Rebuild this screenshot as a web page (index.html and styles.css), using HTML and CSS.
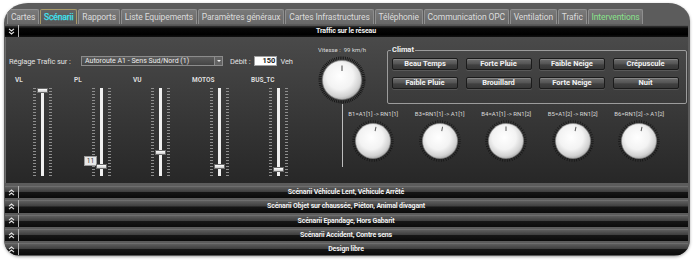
FILE: index.html
```html
<!DOCTYPE html>
<html lang="fr">
<head>
<meta charset="utf-8">
<title>Scénarii</title>
<link rel="stylesheet" href="styles.css">
</head>
<body>
<div class="panel">
  <nav class="tabs">
    <span class="tab">Cartes</span>
    <span class="tab active">Scénarii</span>
    <span class="tab">Rapports</span>
    <span class="tab">Liste Equipements</span>
    <span class="tab">Paramètres généraux</span>
    <span class="tab">Cartes Infrastructures</span>
    <span class="tab">Téléphonie</span>
    <span class="tab">Communication OPC</span>
    <span class="tab">Ventilation</span>
    <span class="tab">Trafic</span>
    <span class="tab green">Interventions</span>
  </nav>

  <div class="bar open">
    <span class="btn"><svg width="7" height="7" viewBox="0 0 7 7"><polyline points="1,0.8 3.5,3 6,0.8" /><polyline points="1,3.8 3.5,6 6,3.8" /></svg></span>
    <span class="title">Traffic sur le réseau</span>
  </div>

  <div class="content">
    <div class="left">
      <div class="setting">
        <span class="lbl main">Réglage Trafic sur :</span>
        <div class="select"><span class="val">Autoroute A1 - Sens Sud/Nord (1)</span><span class="arrow"></span></div>
        <span class="lbl debit">Débit :</span>
        <span class="input">150</span>
        <span class="lbl veh">Veh</span>
      </div>
      <div class="sliders">
        <div class="sgroup"><div class="slabel">VL</div><div class="sbody"><i class="ticks"></i><div class="track"><b class="thumb" style="top:0px"></b></div><i class="ticks"></i></div></div>
        <div class="sgroup"><div class="slabel">PL</div><div class="sbody"><i class="ticks"></i><div class="track"><span class="tip">11</span><b class="thumb" style="top:76px"></b></div><i class="ticks"></i></div></div>
        <div class="sgroup"><div class="slabel">VU</div><div class="sbody"><i class="ticks"></i><div class="track"><b class="thumb" style="top:62px"></b></div><i class="ticks"></i></div></div>
        <div class="sgroup"><div class="slabel">MOTOS</div><div class="sbody"><i class="ticks"></i><div class="track"><b class="thumb" style="top:76px"></b></div><i class="ticks"></i></div></div>
        <div class="sgroup"><div class="slabel">BUS_TC</div><div class="sbody"><i class="ticks"></i><div class="track"><b class="thumb" style="top:79px"></b></div><i class="ticks"></i></div></div>
      </div>
    </div>

    <div class="right">
      <div class="rtop">
        <div class="speed">
          <div class="slbl">Vitesse :&nbsp; 99 km/h</div>
          <svg class="bigknob" width="48" height="48" viewBox="0 0 48 48">
            <defs>
              <radialGradient id="kg" cx="45%" cy="40%" r="62%">
                <stop offset="0" stop-color="#ffffff"/>
                <stop offset="0.55" stop-color="#f3f3f3"/>
                <stop offset="0.85" stop-color="#d2d2d2"/>
                <stop offset="1" stop-color="#a9a9a9"/>
              </radialGradient>
            </defs>
            <circle cx="24" cy="24" r="22" fill="none" stroke="#0e0e0e" stroke-width="3" stroke-dasharray="0.7 1.1"/>
            <circle cx="24" cy="24" r="19.5" fill="url(#kg)" stroke="#8c8c8c" stroke-width="0.6"/>
            <line x1="24" y1="9.5" x2="24" y2="15" stroke="#555" stroke-width="1.1"/>
          </svg>
        </div>
        <fieldset class="climat">
          <legend>Climat</legend>
          <div class="cgrid">
            <button class="cbtn">Beau Temps</button>
            <button class="cbtn">Forte Pluie</button>
            <button class="cbtn">Faible Neige</button>
            <button class="cbtn">Crépuscule</button>
            <button class="cbtn">Faible Pluie</button>
            <button class="cbtn">Brouillard</button>
            <button class="cbtn">Forte Neige</button>
            <button class="cbtn">Nuit</button>
          </div>
        </fieldset>
      </div>
      <div class="rbottom">
        <div class="stem"></div>
        <div class="knobs">
          <div class="kn"><div class="klbl">B1=A1[1] -&gt; RN1[1]</div>
            <svg width="42" height="42" viewBox="0 0 42 42"><circle cx="21" cy="21" r="19.5" fill="none" stroke="#111" stroke-width="2.6" stroke-dasharray="0.6 1.8"/><circle cx="21" cy="21" r="17.5" fill="url(#kg)" stroke="#8c8c8c" stroke-width="0.6"/><line x1="21" y1="6.5" x2="21" y2="11" stroke="#555" stroke-width="1" transform="rotate(12 21 21)"/></svg></div>
          <div class="kn"><div class="klbl">B3=RN1[1] -&gt; A1[1]</div>
            <svg width="42" height="42" viewBox="0 0 42 42"><circle cx="21" cy="21" r="19.5" fill="none" stroke="#111" stroke-width="2.6" stroke-dasharray="0.6 1.8"/><circle cx="21" cy="21" r="17.5" fill="url(#kg)" stroke="#8c8c8c" stroke-width="0.6"/><line x1="21" y1="6.5" x2="21" y2="11" stroke="#555" stroke-width="1" transform="rotate(10 21 21)"/></svg></div>
          <div class="kn"><div class="klbl">B4=A1[1] -&gt; RN1[2]</div>
            <svg width="42" height="42" viewBox="0 0 42 42"><circle cx="21" cy="21" r="19.5" fill="none" stroke="#111" stroke-width="2.6" stroke-dasharray="0.6 1.8"/><circle cx="21" cy="21" r="17.5" fill="url(#kg)" stroke="#8c8c8c" stroke-width="0.6"/><line x1="21" y1="6.5" x2="21" y2="11" stroke="#555" stroke-width="1"/></svg></div>
          <div class="kn"><div class="klbl">B5=A1[2] -&gt; RN1[2]</div>
            <svg width="42" height="42" viewBox="0 0 42 42"><circle cx="21" cy="21" r="19.5" fill="none" stroke="#111" stroke-width="2.6" stroke-dasharray="0.6 1.8"/><circle cx="21" cy="21" r="17.5" fill="url(#kg)" stroke="#8c8c8c" stroke-width="0.6"/><line x1="21" y1="6.5" x2="21" y2="11" stroke="#555" stroke-width="1" transform="rotate(12 21 21)"/></svg></div>
          <div class="kn"><div class="klbl">B6=RN1[2] -&gt; A1[2]</div>
            <svg width="42" height="42" viewBox="0 0 42 42"><circle cx="21" cy="21" r="19.5" fill="none" stroke="#111" stroke-width="2.6" stroke-dasharray="0.6 1.8"/><circle cx="21" cy="21" r="17.5" fill="url(#kg)" stroke="#8c8c8c" stroke-width="0.6"/><line x1="21" y1="6.5" x2="21" y2="11" stroke="#555" stroke-width="1" transform="rotate(12 21 21)"/></svg></div>
        </div>
      </div>
    </div>
  </div>

  <div class="bars">
    <div class="bar"><span class="btn"><svg width="7" height="7" viewBox="0 0 7 7"><polyline points="1,3.2 3.5,1 6,3.2" /><polyline points="1,6.2 3.5,4 6,6.2" /></svg></span><span class="title">Scénarii Véhicule Lent, Véhicule Arrêté</span></div>
    <div class="bar"><span class="btn"><svg width="7" height="7" viewBox="0 0 7 7"><polyline points="1,3.2 3.5,1 6,3.2" /><polyline points="1,6.2 3.5,4 6,6.2" /></svg></span><span class="title">Scénarii Objet sur chaussée, Piéton, Animal divagant</span></div>
    <div class="bar"><span class="btn"><svg width="7" height="7" viewBox="0 0 7 7"><polyline points="1,3.2 3.5,1 6,3.2" /><polyline points="1,6.2 3.5,4 6,6.2" /></svg></span><span class="title">Scénarii Epandage, Hors Gabarit</span></div>
    <div class="bar"><span class="btn"><svg width="7" height="7" viewBox="0 0 7 7"><polyline points="1,3.2 3.5,1 6,3.2" /><polyline points="1,6.2 3.5,4 6,6.2" /></svg></span><span class="title">Scénarii Accident, Contre sens</span></div>
    <div class="bar"><span class="btn"><svg width="7" height="7" viewBox="0 0 7 7"><polyline points="1,3.2 3.5,1 6,3.2" /><polyline points="1,6.2 3.5,4 6,6.2" /></svg></span><span class="title">Design libre</span></div>
  </div>
</div>
</body>
</html>
```

FILE: styles.css
```css
* { box-sizing: border-box; }
html, body { margin: 0; padding: 0; }
body {
  width: 695px;
  height: 260px;
  background: #ffffff;
  font-family: Roboto, "Liberation Sans", sans-serif;
  overflow: hidden;
}

.panel {
  margin: 3px 5px 0 4px;
  height: 253px;
  background: #5c5c5c;
  border-radius: 24px 22px 16px 16px / 20px 18px 16px 16px;
  padding: 6px 2px 0 1px;
  overflow: hidden;
  box-shadow: 0 1px 3px rgba(0, 0, 0, 0.35);
}

/* tabs */
.tabs {
  display: flex;
  gap: 1px;
  height: 15px;
  padding-left: 2px;
}
.tab {
  height: 15px;
  line-height: 14px;
  padding: 0 2.9px;
  font-size: 8.5px;
  letter-spacing: -0.1px;
  color: #dcdcdc;
  background: linear-gradient(#7a7a7a, #686868);
  border: 1px solid #8f8f8f;
  border-bottom: none;
  border-radius: 2px 2px 0 0;
  white-space: nowrap;
}
.tab.active {
  color: #3ee4f2;
  background: linear-gradient(#646464, #575757);
  border-color: #a89a68;
  -webkit-text-stroke: 0.25px #3ee4f2;
}
.tab.green { color: #8ae28c; }

/* accordion bars */
.bar {
  display: flex;
  height: 12.3px;
  background: linear-gradient(#7a7a7a 0, #5c5c5c 10%, #3f3f3f 47%, #161616 53%, #0b0b0b 100%);
}
.bar.open {
  margin-top: 1px;
  height: 12px;
  background: linear-gradient(#6a6a6a 0, #2c2c2c 12%, #070707 30%, #000 80%, #121212 100%);
}
.bar .btn {
  width: 14px;
  display: flex;
  align-items: center;
  justify-content: center;
  border-right: 1px solid #b4b4b4;
}
.bar .btn svg polyline {
  fill: none;
  stroke: #e6e6e6;
  stroke-width: 1.1;
}
.bar .title {
  flex: 1;
  text-align: center;
  padding-right: 15px;
  font-size: 7px;
  font-weight: bold;
  letter-spacing: -0.15px;
  line-height: 12px;
  color: #f2f2f2;
  white-space: nowrap;
}
.bars {
  display: flex;
  flex-direction: column;
  gap: 2px;
  margin-top: 3px;
}

/* content */
.content {
  display: flex;
  height: 146px;
  background: linear-gradient(#4a4a4a, #272727);
  border-left: 1px solid #6c6c6c;
}
.left { width: 304px; }

.setting {
  display: flex;
  align-items: center;
  height: 10px;
  margin-top: 19px;
  padding-left: 3px;
  font-size: 7.5px;
  color: #e2e2e2;
}
.lbl { white-space: nowrap; letter-spacing: -0.1px; }
.lbl.main { width: 72px; }
.select {
  display: flex;
  align-items: center;
  width: 142px;
  height: 10px;
  border: 1px solid #8c8c8c;
  background: linear-gradient(#5c5c5c, #454545);
  color: #ececec;
  font-size: 7px;
  padding-left: 3px;
}
.select .val { white-space: nowrap; line-height: 8px; }
.select .arrow {
  margin-left: auto;
  width: 8px;
  height: 8px;
  border-left: 1px solid #8c8c8c;
  background: #626262;
  display: flex;
  align-items: center;
  justify-content: center;
}
.select .arrow::after {
  content: "";
  border-left: 2px solid transparent;
  border-right: 2px solid transparent;
  border-top: 2px solid #eeeeee;
}
.lbl.debit { margin-left: 7px; }
.input {
  margin-left: 4px;
  width: 23px;
  height: 10px;
  background: #ffffff;
  border: 1px solid #a0a0a0;
  color: #1a1a1a;
  font-weight: bold;
  font-size: 7.5px;
  line-height: 8px;
  text-align: right;
  padding-right: 1px;
}
.lbl.veh { margin-left: 3px; }

/* sliders */
.sliders {
  display: flex;
  margin-top: 11px;
  padding-left: 9px;
}
.sgroup { width: 60.5px; }
.slabel {
  height: 7px;
  line-height: 7px;
  font-size: 6.5px;
  font-weight: bold;
  color: #dedede;
}
.sbody {
  display: flex;
  gap: 5px;
  height: 88px;
  margin-top: 4px;
  margin-left: 18px;
}
.ticks {
  display: block;
  width: 3px;
  height: 88px;
  background: repeating-linear-gradient(to bottom, #8e8e8e 0 1px, transparent 1px 3px);
}
.track {
  position: relative;
  width: 3px;
  background: #f0f0f0;
}
.thumb {
  position: absolute;
  left: -4px;
  width: 11px;
  height: 5px;
  background: linear-gradient(#ffffff, #cccccc);
  border: 1px solid #6c6c6c;
}
.tip {
  position: absolute;
  left: -16px;
  top: 68px;
  width: 13px;
  height: 10px;
  background: #e8e8e8;
  border: 1px solid #9a9a9a;
  color: #333;
  font-size: 6.5px;
  line-height: 8px;
  text-align: center;
}

/* right side */
.right {
  flex: 1;
  display: flex;
  flex-direction: column;
}
.rtop { display: flex; }
.speed {
  width: 64px;
  padding-top: 9px;
  display: flex;
  flex-direction: column;
  align-items: center;
}
.slbl {
  font-size: 6px;
  line-height: 7px;
  color: #dcdcdc;
  white-space: nowrap;
}
.bigknob { display: block; margin-top: 3px; }

.climat {
  margin: 9px 0 0 13px;
  width: 300px;
  border: 1px solid #9c9c9c;
  border-radius: 2px;
  padding: 0 4px 6px 4px;
  min-width: 0;
}
.climat legend {
  font-size: 7.5px;
  font-weight: bold;
  line-height: 8px;
  color: #f0f0f0;
  padding: 0 1px;
  margin-left: -1px;
}
.cgrid {
  display: grid;
  grid-template-columns: repeat(4, 66px);
  column-gap: 7.5px;
  row-gap: 7px;
  margin-top: 4px;
}
.cbtn {
  height: 12px;
  padding: 0;
  border: 1px solid #1b1b1b;
  border-radius: 2px;
  background: linear-gradient(#6e6e6e, #565656 45%, #404040 60%, #373737);
  box-shadow: inset 0 1px 0 rgba(255, 255, 255, 0.18), 0 1px 0 rgba(255, 255, 255, 0.12);
  color: #f2f2f2;
  font-family: Roboto, "Liberation Sans", sans-serif;
  font-size: 7.5px;
  font-weight: bold;
  line-height: 10px;
  text-align: center;
  white-space: nowrap;
}

.rbottom { display: flex; }
.stem {
  width: 33px;
  height: 63px;
  border-right: 1px solid #bdbdbd;
}
.knobs {
  display: flex;
  margin-left: -3px;
  padding-top: 6px;
}
.kn {
  width: 66.5px;
  display: flex;
  flex-direction: column;
  align-items: center;
}
.klbl {
  font-size: 6px;
  line-height: 7px;
  color: #dadada;
  white-space: nowrap;
}
.kn svg { display: block; margin-top: 3px; }
```
